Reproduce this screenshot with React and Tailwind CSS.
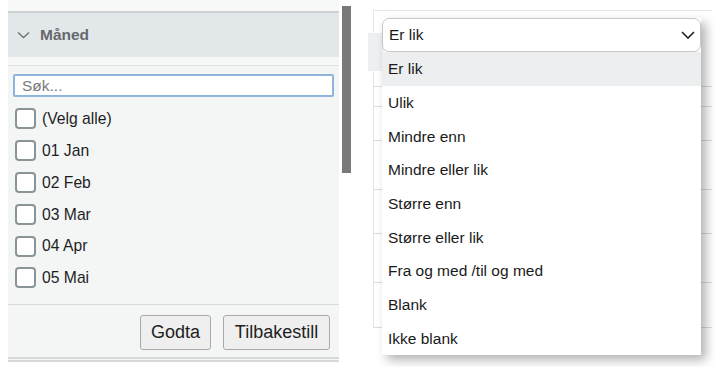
import { useState } from "react";

const months = ["01 Jan", "02 Feb", "03 Mar", "04 Apr", "05 Mai"];

const operators = [
  "Er lik",
  "Ulik",
  "Mindre enn",
  "Mindre eller lik",
  "Større enn",
  "Større eller lik",
  "Fra og med /til og med",
  "Blank",
  "Ikke blank",
];

function Checkbox({ label }) {
  return (
    <label className="flex h-[31.8px] items-center gap-[6px] pl-[7px]">
      <span className="h-[21px] w-[21px] rounded-[4px] border-2 border-[#8a9497] bg-white" />
      <span className="text-[15.7px] text-[#1e1e1e]">{label}</span>
    </label>
  );
}

// Left: set filter panel with month checkboxes
function MonthFilter() {
  return (
    <div className="flex w-[360px] bg-white">
      <div className="ml-[8px] flex w-[331px] flex-col bg-[#f4f6f6]">
        <div className="h-[11px] bg-[#f7f8f8]" />
        <div className="flex h-[46px] items-center gap-[10px] border-t-2 border-[#cdd1d3] bg-[#e2e8ea] pl-[9px]">
          <svg width="13" height="8" viewBox="0 0 13 8" fill="none">
            <path d="M1 1.5 L6.5 6.5 L12 1.5" stroke="#6d7073" strokeWidth="1.3" />
          </svg>
          <span className="text-[15.5px] font-bold text-[#66696c]">Måned</span>
        </div>
        <div className="h-[9px] border-b border-[#dfe3e4] bg-[#f6f7f7]" />
        <div className="px-[5px] pt-[8px]">
          <div className="flex h-[23px] items-center rounded-[2px] border-2 border-[#8fb4de] bg-white pl-[7px] text-[15.5px] text-[#7a7a7a]">
            Søk...
          </div>
        </div>
        <div className="mt-[6px] flex flex-col">
          <Checkbox label="(Velg alle)" />
          {months.map((m) => (
            <Checkbox key={m} label={m} />
          ))}
        </div>
        <div className="mt-[10px] flex justify-end gap-[12px] border-t border-[#d8dbdc] pr-[9px] pt-[10px]">
          <button className="h-[35px] w-[71px] rounded-[3px] border border-[#a9a9a9] bg-[#efefef] text-[18px] text-[#1e1e1e]">
            Godta
          </button>
          <button className="h-[35px] w-[107px] rounded-[3px] border border-[#a9a9a9] bg-[#efefef] text-[18px] text-[#1e1e1e]">
            Tilbakestill
          </button>
        </div>
        <div className="mt-[7px] h-[5px] border-y-2 border-[#d6d9da]" />
        <div className="flex-1 bg-white" />
      </div>
      <div className="ml-[3px] mt-[6px] h-[167px] w-[9px] bg-[#797979]" />
    </div>
  );
}

// Right: operator dropdown over a column menu
function OperatorSelect() {
  const [value] = useState("Er lik");
  const lines = [20, 34, 49, 44, 49, 45];

  return (
    <div className="relative w-[359px] bg-white">
      <div className="ml-[13px] mt-[10px] w-[339px] border-l border-t border-[#e4e6e7]">
        <div className="ml-[-6px] mt-[22px] h-[38px] w-[16px] bg-[#eef0f1]" />
        <div className="h-[16px] border-b border-[#dadddf]" />
        {lines.map((h, i) => (
          <div key={i} style={{ height: h }} className="border-b border-[#dadddf]" />
        ))}
      </div>

      <div className="absolute left-[22px] top-[18px] w-[319px] shadow-[5px_5px_10px_rgba(0,0,0,0.3)]">
        <div className="flex h-[34px] items-center justify-between rounded-[7px] border border-[#c8c8c8] bg-white pl-[6px] pr-[5px] text-[15.5px] text-[#1a1a1a]">
          <span>{value}</span>
          <svg width="14" height="8" viewBox="0 0 14 8" fill="none">
            <path d="M1 1 L7 7 L13 1" stroke="#222" strokeWidth="1.6" />
          </svg>
        </div>
        <ul className="bg-white">
          {operators.map((op) => (
            <li
              key={op}
              className={`flex h-[33.7px] items-center pl-[6px] text-[15.5px] text-[#1a1a1a] ${
                op === value ? "bg-[#eceeef]" : ""
              }`}
            >
              {op}
            </li>
          ))}
        </ul>
      </div>
    </div>
  );
}

export default function App() {
  return (
    <div
      className="flex h-[367px] w-[719px] overflow-hidden bg-white"
      style={{ fontFamily: '"Liberation Sans", Arial, sans-serif' }}
    >
      <MonthFilter />
      <OperatorSelect />
    </div>
  );
}
